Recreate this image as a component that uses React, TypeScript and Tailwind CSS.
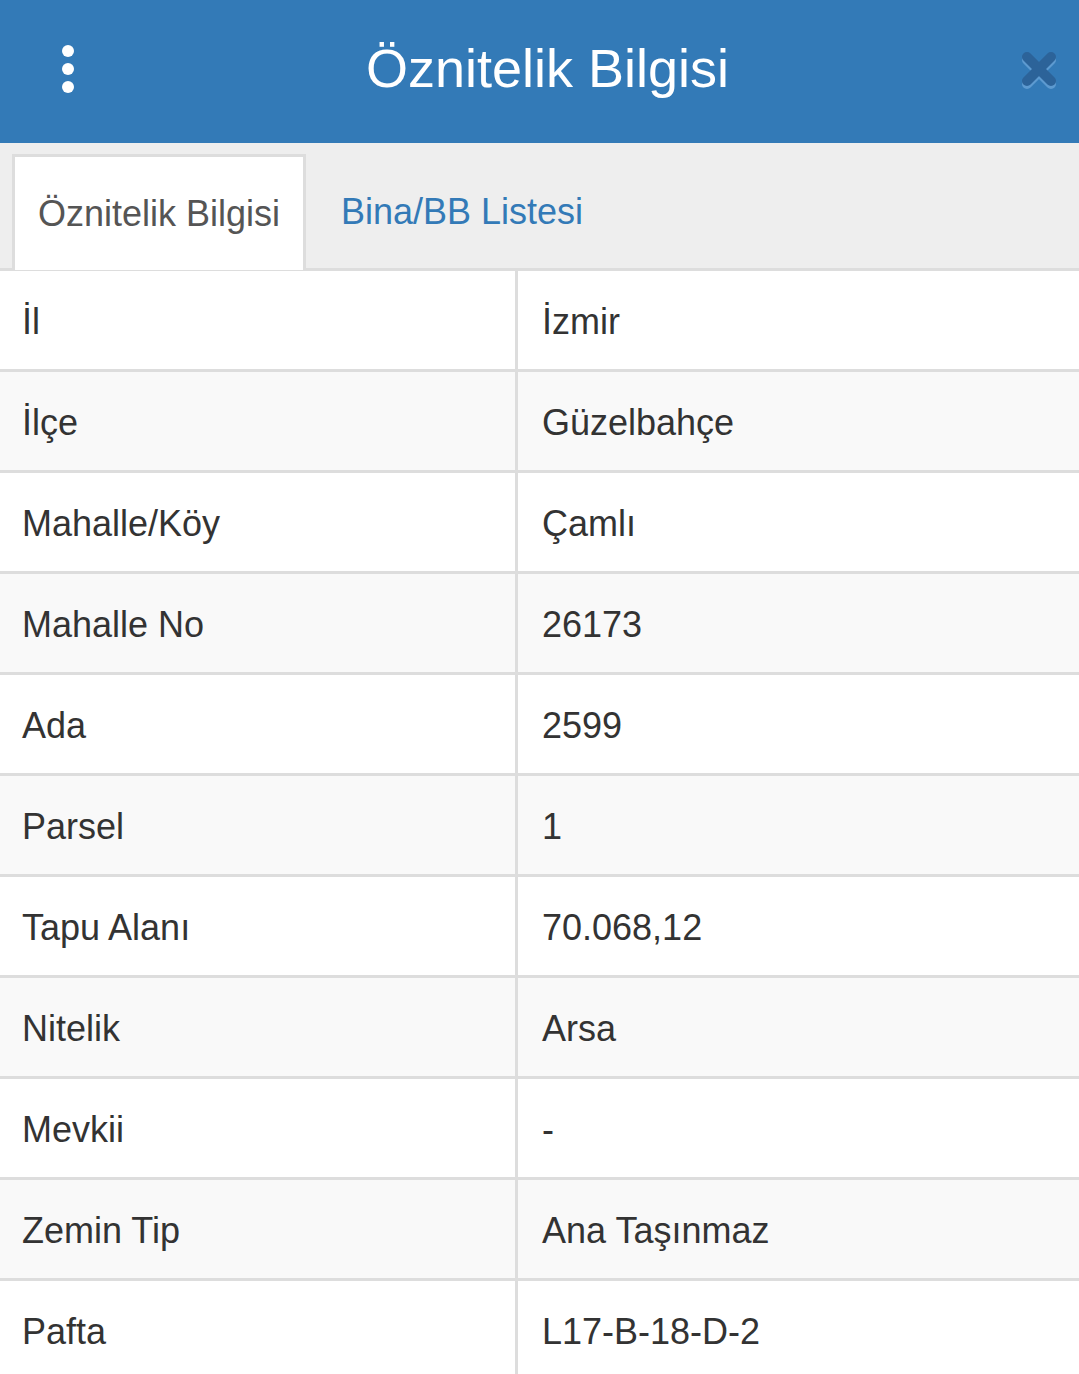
import React from "react";

const rows: [string, string][] = [
  ["İl", "İzmir"],
  ["İlçe", "Güzelbahçe"],
  ["Mahalle/Köy", "Çamlı"],
  ["Mahalle No", "26173"],
  ["Ada", "2599"],
  ["Parsel", "1"],
  ["Tapu Alanı", "70.068,12"],
  ["Nitelik", "Arsa"],
  ["Mevkii", "-"],
  ["Zemin Tip", "Ana Taşınmaz"],
  ["Pafta", "L17-B-18-D-2"],
];

const App = () => {
  return (
    <div className="w-[1079px] h-[1374px] overflow-hidden bg-white text-[#333] font-['Liberation_Sans',Arial,sans-serif]">
      {/* header */}
      <header className="h-[143px] bg-[#337ab7] flex items-center justify-between pl-[56px] pr-[20px]">
        <div className="flex flex-col items-center gap-[6px] w-[24px] -mt-[6px]">
          <span className="block w-[12px] h-[12px] rounded-full bg-white" />
          <span className="block w-[12px] h-[12px] rounded-full bg-white" />
          <span className="block w-[12px] h-[12px] rounded-full bg-white" />
        </div>
        <h1 className="text-[54px] text-white leading-none mr-[4px] -mt-[8px]">Öznitelik Bilgisi</h1>
        <button className="w-[40px] h-[40px] relative -mt-[6px]">
          <svg viewBox="0 0 40 40" className="absolute inset-0 w-[40px] h-[40px]">
            <g transform="translate(0 3)" stroke="#5d9ad0" strokeWidth="10" strokeLinecap="round">
              <path d="M8 8 L32 32 M32 8 L8 32" />
            </g>
            <g stroke="#2c6399" strokeWidth="10" strokeLinecap="round">
              <path d="M8 8 L32 32 M32 8 L8 32" />
            </g>
          </svg>
        </button>
      </header>

      {/* tabs */}
      <nav className="bg-[#eee] pt-[10px] pl-[12px] flex items-end border-b-[3px] border-[#ddd] h-[128px]">
        <div className="w-[294px] h-[116px] bg-white border-[3px] border-b-0 border-[#ddd] flex items-center pl-[23px] text-[36px] text-[#555] -mb-[2px]">
          Öznitelik Bilgisi
        </div>
        <div className="h-[116px] flex items-center pl-[35px] text-[36px] text-[#337ab7] -mb-[2px]">
          Bina/BB Listesi
        </div>
      </nav>

      {/* table */}
      <div className="flex flex-col">
        {rows.map(([k, v], i) => (
          <div
            key={k}
            className={
              "flex h-[101px] border-b-[3px] border-[#ddd] text-[36px] " +
              (i % 2 === 1 ? "bg-[#f9f9f9]" : "bg-white")
            }
          >
            <div className="w-[518px] flex items-center pl-[22px] pt-[3px] border-r-[3px] border-[#ddd] shrink-0">{k}</div>
            <div className="flex-1 flex items-center pl-[24px] pt-[3px]">{v}</div>
          </div>
        ))}
      </div>
    </div>
  );
};

export default App;
